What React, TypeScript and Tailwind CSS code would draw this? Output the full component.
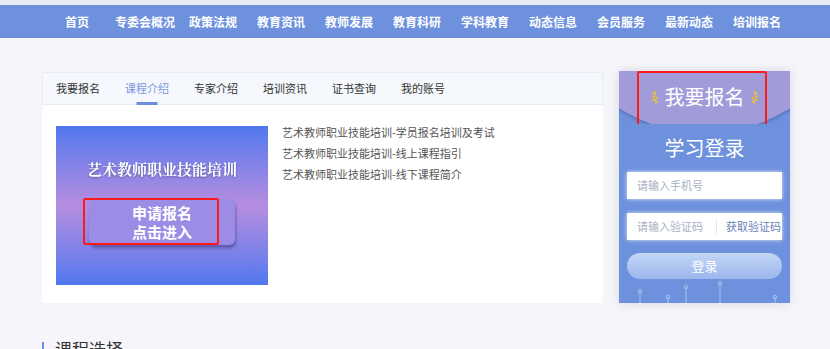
import React from 'react';

const navItems = [
  '首页',
  '专委会概况',
  '政策法规',
  '教育资讯',
  '教师发展',
  '教育科研',
  '学科教育',
  '动态信息',
  '会员服务',
  '最新动态',
  '培训报名',
];

const tabs = ['我要报名', '课程介绍', '专家介绍', '培训资讯', '证书查询', '我的账号'];

const links = [
  '艺术教师职业技能培训-学员报名培训及考试',
  '艺术教师职业技能培训-线上课程指引',
  '艺术教师职业技能培训-线下课程简介',
];

const font = "font-['Microsoft_YaHei','Noto_Sans_CJK_SC',sans-serif]";

function Laurel(props: { flip?: boolean }) {
  return (
    <svg
      width="8"
      height="16"
      viewBox="0 0 8 16"
      className={props.flip ? '-scale-x-100' : ''}
    >
      <path d="M5 1 Q2 8 5 15" stroke="#e8c23a" strokeWidth="1" fill="none" />
      <ellipse cx="3" cy="4" rx="1.6" ry="1" fill="#e8c23a" />
      <ellipse cx="2.6" cy="7.5" rx="1.8" ry="1" fill="#e8c23a" />
      <ellipse cx="3" cy="11" rx="1.8" ry="1" fill="#e8c23a" />
      <ellipse cx="6" cy="9" rx="1.4" ry="0.9" fill="#e8c23a" />
      <ellipse cx="6" cy="12.5" rx="1.4" ry="0.9" fill="#e8c23a" />
    </svg>
  );
}

function Pins() {
  const pins = [
    { x: 21, h: 12 },
    { x: 49, h: 6 },
    { x: 67, h: 16 },
    { x: 101, h: 20 },
    { x: 156, h: 6 },
  ];
  return (
    <svg width="171" height="24" viewBox="0 0 171 24" className="block">
      {pins.map((p) => (
        <g key={p.x} stroke="#a9c1f0" fill="none" strokeWidth="1">
          <line x1={p.x} y1={24 - p.h} x2={p.x} y2="24" />
          <circle cx={p.x} cy={24 - p.h} r="1.8" />
        </g>
      ))}
    </svg>
  );
}

export default function App() {
  return (
    <div className={`w-[830px] h-[349px] overflow-hidden bg-[#f6f6fa] ${font}`}>
      <div className="h-[5px] bg-[#e7ecf4]" />
      <div className="h-[33px] bg-[#6d91dd] flex items-center pl-[43px]">
        {navItems.map((n) => (
          <div
            key={n}
            className="w-[68px] text-center text-white text-[12px] font-bold"
          >
            {n}
          </div>
        ))}
      </div>

      <div className="flex items-start gap-[16px] pl-[42px] pt-[34px]">
        <div className="w-[561px] h-[231px] bg-white">
          <div className="h-[33px] bg-[#f5f8fc] border border-[#e6edf7] flex items-center pl-[13px] gap-[25px]">
            {tabs.map((t, i) => (
              <div
                key={t}
                className={`relative h-full w-[44px] flex items-center text-[11px] ${
                  i === 1 ? 'text-[#7b98df]' : 'text-[#333]'
                }`}
              >
                {t}
                {i === 1 && (
                  <div className="absolute bottom-[-1px] left-1/2 -translate-x-1/2 w-[21px] h-[3px] bg-[#6d8ede]" />
                )}
              </div>
            ))}
          </div>
          <div className="flex pl-[14px] pt-[21px] gap-[14px]">
            <div className="w-[212px] h-[159px] bg-gradient-to-b from-[#4f77ee] via-[#b58de0] to-[#4f77ee] flex flex-col items-center">
              <div className="mt-[32px] text-white text-[15px] font-bold font-['Noto_Serif_CJK_SC','Noto_Sans_CJK_SC',serif] drop-shadow-[0_1px_1px_rgba(0,0,0,0.3)]">
                艺术教师职业技能培训
              </div>
              <div className="relative mt-[18px] w-[146px] h-[46px] rounded-[6px] bg-[#9c8ce6] shadow-[1px_3px_3px_rgba(60,50,120,0.5)] flex flex-col items-center justify-center text-white text-[15px] font-bold leading-[19px]">
                <div>申请报名</div>
                <div>点击进入</div>
                <div className="absolute left-[-6px] top-[-1px] w-[136px] h-[47px] border-2 border-[#ff1a1a] rounded-[2px]" />
              </div>
            </div>
            <div className="flex flex-col gap-[6px] text-[11px] text-[#555] -mt-[1px] leading-[15px]">
              {links.map((l) => (
                <div key={l}>{l}</div>
              ))}
            </div>
          </div>
        </div>

        <div className="w-[171px] h-[232px] -mt-[1px] bg-[#6d91dd] shadow-[0_0_10px_rgba(120,120,160,0.25)] flex flex-col">
          <div className="relative h-[62px] overflow-hidden">
            <div className="absolute left-[-60px] right-[-60px] top-[-198px] h-[260px] rounded-[50%] bg-[#a19bd9] shadow-[0_2px_3px_rgba(60,60,120,0.35)]" />
            <div className="relative h-full flex items-center justify-center gap-[6px] pb-[2px]">
              <Laurel />
              <span className="text-white text-[20px]">我要报名</span>
              <Laurel flip />
            </div>
            <div className="absolute left-[18px] top-0 w-[130px] h-[60px] border-2 border-[#ff1a1a] rounded-[2px]" />
          </div>
          <div className="text-center text-white text-[20px] leading-[26px] mt-[11px]">
            学习登录
          </div>
          <div className="px-[8px] mt-[11px] flex flex-col">
            <div className="h-[27px] bg-white shadow-[0_0_4px_rgba(255,255,255,0.8)] flex items-center pl-[10px] text-[11px] text-[#a9b0c6]">
              请输入手机号
            </div>
            <div className="h-[27px] mt-[14px] bg-white shadow-[0_0_4px_rgba(255,255,255,0.8)] flex items-center pl-[10px] text-[11px]">
              <span className="text-[#a9b0c6]">请输入验证码</span>
              <span className="ml-[13px] h-[14px] w-px bg-[#e2e5ee]" />
              <span className="ml-[9px] text-[#6a7fb8]">获取验证码</span>
            </div>
            <div className="h-[26px] mt-[13px] rounded-full bg-gradient-to-b from-[#c3d7f6] to-[#9cb6ec] flex items-center justify-center text-white text-[13px]">
              登录
            </div>
          </div>
          <div className="mt-auto">
            <Pins />
          </div>
        </div>
      </div>

      <div className="flex items-center pl-[42px] mt-[33px]">
        <div className="w-[2px] h-[14px] bg-[#6d8ede]" />
        <div className="ml-[11px] text-[17px] text-[#333]">课程选择</div>
      </div>
    </div>
  );
}
